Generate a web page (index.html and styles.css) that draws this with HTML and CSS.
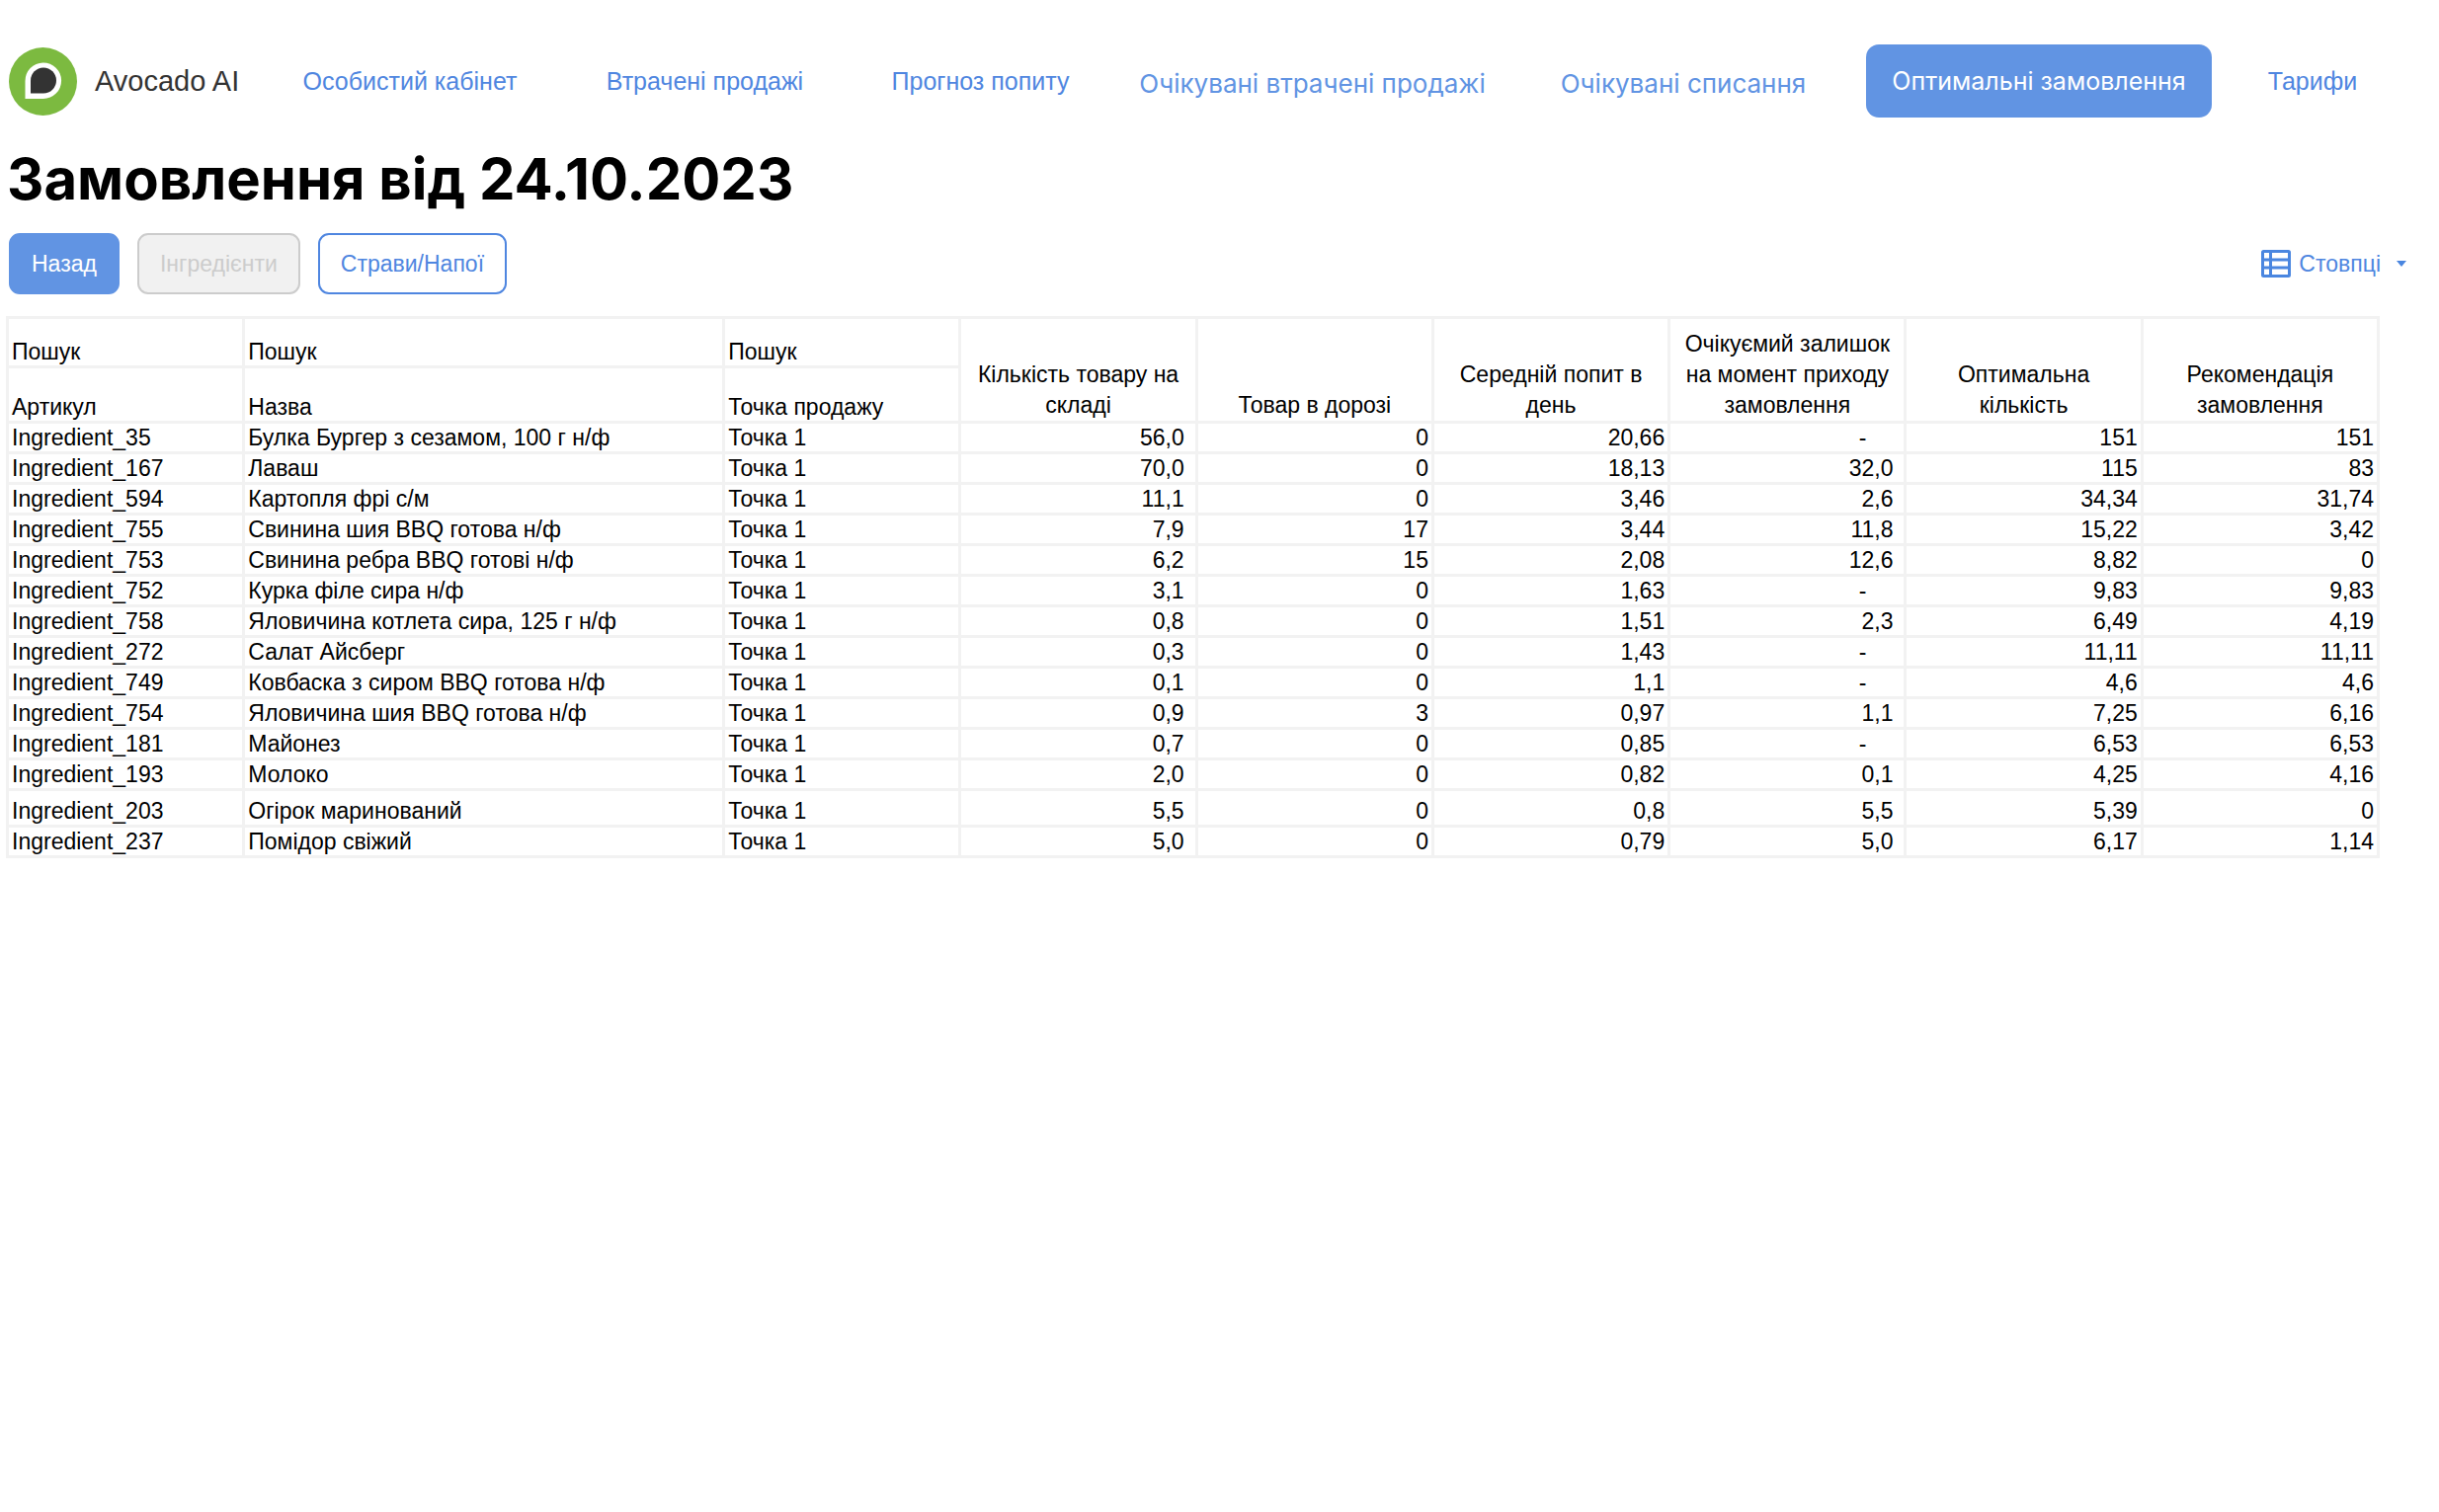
FILE: index.html
```html
<!DOCTYPE html>
<html lang="uk">
<head>
<meta charset="utf-8">
<title>Avocado AI – Оптимальні замовлення</title>
<link rel="stylesheet" href="styles.css">
</head>
<body>
<header class="topbar">
  <a class="brand" href="#">
    <svg class="brand-logo" viewBox="0 0 69 69" aria-hidden="true">
      <circle cx="34.500" cy="34.500" r="34.500" fill="#7cba40"/>
      <path d="M16.500 52V34a18.300 18.300 0 1 1 18.300 18z" fill="#fff"/>
      <path d="M22 46.500V33.500a13 13 0 1 1 13 13z" fill="#333"/>
    </svg>
    <span>Avocado AI</span>
  </a>
  <nav class="nav">
    <a class="nav-link" href="#">Особистий кабінет</a>
    <a class="nav-link" href="#">Втрачені продажі</a>
    <a class="nav-link" href="#">Прогноз попиту</a>
    <a class="nav-link nav-link-new" href="#">Очікувані втрачені продажі</a>
    <a class="nav-link nav-link-new" href="#">Очікувані списання</a>
    <a class="nav-link nav-link-active" href="#" aria-current="page">Оптимальні замовлення</a>
    <a class="nav-link" href="#">Тарифи</a>
  </nav>
</header>
<main class="page">
  <h1 class="title">Замовлення від 24.10.2023</h1>
  <div class="toolbar">
    <button class="btn btn-primary" type="button">Назад</button>
    <button class="btn" type="button" disabled>Інгредієнти</button>
    <button class="btn" type="button">Страви/Напої</button>
    <button class="columns" type="button">
      <svg class="columns-icon" viewBox="0 0 30 28" aria-hidden="true">
        <rect x="1.500" y="1.500" width="27" height="25" rx="1" fill="none" stroke="#4a86e0" stroke-width="3"/>
        <path d="M1 10h28M1 18h28M9.500 1v26" fill="none" stroke="#4a86e0" stroke-width="3"/>
      </svg>
      <span>Стовпці</span>
      <svg class="columns-caret" viewBox="0 0 10 6" aria-hidden="true"><path d="M0 0h10L5 6z" fill="#4a86e0"/></svg>
    </button>
  </div>
  <table class="orders">
    <colgroup>
      <col class="col"><col><col class="col"><col class="col"><col class="col"><col class="col"><col class="col"><col class="col"><col class="col">
    </colgroup>
    <thead>
      <tr class="search-row">
        <td>Пошук</td><td>Пошук</td><td>Пошук</td>
        <th scope="col" rowspan="2">Кількість товару на складі</th>
        <th scope="col" rowspan="2">Товар в дорозі</th>
        <th scope="col" rowspan="2">Середній попит в день</th>
        <th scope="col" rowspan="2">Очікуємий залишок на момент приходу замовлення</th>
        <th scope="col" rowspan="2">Оптимальна кількість</th>
        <th scope="col" rowspan="2">Рекомендація замовлення</th>
      </tr>
      <tr class="head-row"><th scope="col">Артикул</th><th scope="col">Назва</th><th scope="col">Точка продажу</th></tr>
    </thead>
    <tbody>
      <tr><td>Ingredient_35</td><td>Булка Бургер з сезамом, 100 г н/ф</td><td>Точка 1</td><td>56,0</td><td>0</td><td>20,66</td><td class="none">-</td><td>151</td><td>151</td></tr>
      <tr><td>Ingredient_167</td><td>Лаваш</td><td>Точка 1</td><td>70,0</td><td>0</td><td>18,13</td><td>32,0</td><td>115</td><td>83</td></tr>
      <tr><td>Ingredient_594</td><td>Картопля фрі с/м</td><td>Точка 1</td><td>11,1</td><td>0</td><td>3,46</td><td>2,6</td><td>34,34</td><td>31,74</td></tr>
      <tr><td>Ingredient_755</td><td>Свинина шия BBQ готова н/ф</td><td>Точка 1</td><td>7,9</td><td>17</td><td>3,44</td><td>11,8</td><td>15,22</td><td>3,42</td></tr>
      <tr><td>Ingredient_753</td><td>Свинина ребра BBQ готові н/ф</td><td>Точка 1</td><td>6,2</td><td>15</td><td>2,08</td><td>12,6</td><td>8,82</td><td>0</td></tr>
      <tr><td>Ingredient_752</td><td>Курка філе сира н/ф</td><td>Точка 1</td><td>3,1</td><td>0</td><td>1,63</td><td class="none">-</td><td>9,83</td><td>9,83</td></tr>
      <tr><td>Ingredient_758</td><td>Яловичина котлета сира, 125 г н/ф</td><td>Точка 1</td><td>0,8</td><td>0</td><td>1,51</td><td>2,3</td><td>6,49</td><td>4,19</td></tr>
      <tr><td>Ingredient_272</td><td>Салат Айсберг</td><td>Точка 1</td><td>0,3</td><td>0</td><td>1,43</td><td class="none">-</td><td>11,11</td><td>11,11</td></tr>
      <tr><td>Ingredient_749</td><td>Ковбаска з сиром BBQ готова н/ф</td><td>Точка 1</td><td>0,1</td><td>0</td><td>1,1</td><td class="none">-</td><td>4,6</td><td>4,6</td></tr>
      <tr><td>Ingredient_754</td><td>Яловичина шия BBQ готова н/ф</td><td>Точка 1</td><td>0,9</td><td>3</td><td>0,97</td><td>1,1</td><td>7,25</td><td>6,16</td></tr>
      <tr><td>Ingredient_181</td><td>Майонез</td><td>Точка 1</td><td>0,7</td><td>0</td><td>0,85</td><td class="none">-</td><td>6,53</td><td>6,53</td></tr>
      <tr><td>Ingredient_193</td><td>Молоко</td><td>Точка 1</td><td>2,0</td><td>0</td><td>0,82</td><td>0,1</td><td>4,25</td><td>4,16</td></tr>
      <tr class="tall"><td>Ingredient_203</td><td>Огірок маринований</td><td>Точка 1</td><td>5,5</td><td>0</td><td>0,8</td><td>5,5</td><td>5,39</td><td>0</td></tr>
      <tr><td>Ingredient_237</td><td>Помідор свіжий</td><td>Точка 1</td><td>5,0</td><td>0</td><td>0,79</td><td>5,0</td><td>6,17</td><td>1,14</td></tr>
    </tbody>
  </table>
</main>
</body>
</html>
```
FILE: styles.css
```css
* { box-sizing: border-box; }

body {
  margin: 0;
  background: #fff;
  color: #000;
  font-family: "Liberation Sans", Arial, sans-serif;
  font-size: 23px;
}

a { text-decoration: none; }

.topbar {
  display: flex;
  align-items: center;
  padding: 45px 41px 0 9px;
}

.brand {
  display: flex;
  align-items: center;
  gap: 18px;
  width: 256px;
  flex: none;
  color: #333;
  font-size: 29px;
}

.brand-logo { width: 69px; height: 69px; }

.nav {
  flex: 1;
  display: grid;
  grid-template-columns: 300fr 297fr 261fr 411fr 340fr 380fr 174fr;
  align-items: center;
  justify-items: center;
}

.nav-link {
  color: #4f86e0;
  font-size: 25px;
  line-height: 32px;
  white-space: nowrap;
}

.nav-link-new {
  padding-top: 6px;
  color: #6194e3;
  font-family: Inter, sans-serif;
  font-size: 26px;
}

.nav-link-active {
  padding: 21px 26px;
  border-radius: 13px;
  background: #6194e3;
  color: #fff;
  font-family: Inter, sans-serif;
}

.page { padding: 0 33px 0 6px; }

.title {
  margin: 28px 0 0 1px;
  font-family: Inter, sans-serif;
  font-size: 58px;
  font-weight: 700;
  line-height: 68px;
}

.toolbar {
  display: flex;
  align-items: center;
  gap: 18px;
  margin: 21px 0 22px 3px;
}

.btn {
  height: 62px;
  padding: 0 21px;
  border: 2px solid #4f86e0;
  border-radius: 11px;
  background: #fff;
  color: #4f86e0;
  font: inherit;
}

.btn-primary {
  border-color: #6194e3;
  background: #6194e3;
  color: #fff;
}

.btn:disabled {
  border-color: #ccc;
  background: #f1f1f1;
  color: #ccc;
}

.columns {
  display: flex;
  align-items: center;
  gap: 8px;
  margin-left: auto;
  padding: 0;
  border: 0;
  background: none;
  color: #4f86e0;
  font: inherit;
}

.columns-icon { width: 30px; height: 28px; }
.columns-caret { width: 10px; height: 6px; margin-left: 8px; }

/* leaves a strip at the right, under the column menu */
.orders {
  width: calc(100% - 27px);
  table-layout: fixed;
  border-collapse: collapse;
  line-height: 28px;
}

/* the name column takes what the others leave */
.col { width: 9.97%; }

.orders th,
.orders td {
  padding: 0 3px;
  border: 3px solid #f2f2f2;
  font-weight: 400;
  text-align: left;
  vertical-align: bottom;
}

.orders th[rowspan] {
  padding: 0 12px;
  line-height: 31px;
  text-align: center;
}

.search-row { height: 50px; }
.head-row { height: 56px; }
.tall { height: 37px; }

.orders tbody td:nth-child(n+4) { text-align: right; }
.orders tbody td:nth-child(4),
.orders tbody td:nth-child(7) { padding-right: 11px; }
.orders tbody td.none { padding-right: 38px; }
```
